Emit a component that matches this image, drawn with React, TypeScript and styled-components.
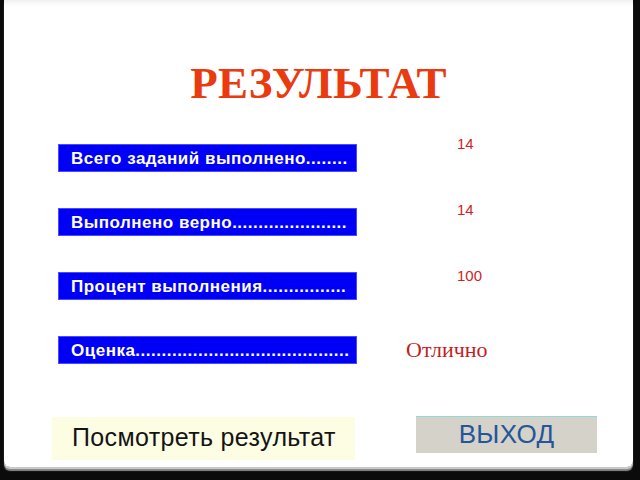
import React from "react";
import styled, { createGlobalStyle } from "styled-components";

const Global = createGlobalStyle`
  html, body {
    margin: 0;
    padding: 0;
    background: #0b0b0b;
    width: 640px;
    height: 480px;
    overflow: hidden;
  }
`;

const Screen = styled.div`
  width: 640px;
  height: 480px;
  background: #0b0b0b;
  display: flex;
  align-items: flex-start;
`;

const Slide = styled.div`
  margin-left: 4px;
  width: 629px;
  height: 467px;
  background: linear-gradient(#efefef 0px, #fbfbfb 4px, #ffffff 8px);
  border-radius: 0 0 6px 6px;
  box-shadow: 0 2px 0 #c9c9c9, 0 4px 1px #8a8a8a;
  display: flex;
  flex-direction: column;
  align-items: stretch;
  box-sizing: border-box;
  padding-top: 57px;
`;

const Title = styled.h1`
  margin: 0;
  text-align: center;
  font-family: "Liberation Serif", "Times New Roman", serif;
  font-weight: bold;
  font-size: 45px;
  line-height: 52px;
  color: #ea3a10;
  letter-spacing: 0.3px;
`;

const Rows = styled.div`
  margin-top: 35px;
  padding-left: 54px;
  display: flex;
  flex-direction: column;
  gap: 36px;
`;

const Row = styled.div`
  display: flex;
  align-items: flex-start;
  height: 28px;
`;

const Bar = styled.div`
  width: 299px;
  height: 28px;
  box-sizing: border-box;
  background: #0000f6;
  border: 1px solid #4a4aff;
  padding: 1px 0 0 12px;
  font-family: "Liberation Sans", Arial, sans-serif;
  font-weight: bold;
  font-size: 17px;
  letter-spacing: 0.5px;
  line-height: 26px;
  color: #ffffff;
  white-space: nowrap;
  overflow: hidden;
`;

const Count = styled.div<{ $lift: number }>`
  margin-left: 100px;
  margin-top: ${(p) => -p.$lift}px;
  font-family: "Liberation Sans", Arial, sans-serif;
  font-size: 15px;
  line-height: 17px;
  color: #d02424;
`;

const Grade = styled.div`
  margin-left: 49px;
  font-family: "Liberation Serif", "Times New Roman", serif;
  font-size: 22px;
  line-height: 28px;
  color: #c41e24;
`;

const Footer = styled.div`
  margin-top: 52px;
  display: flex;
  align-items: flex-start;
`;

const ResultBox = styled.div`
  margin-left: 48px;
  margin-top: 1px;
  width: 303px;
  height: 43px;
  box-sizing: border-box;
  background: #fdfde4;
  padding: 0 0 0 20px;
  font-family: "Liberation Sans", Arial, sans-serif;
  font-size: 25px;
  letter-spacing: 0.35px;
  line-height: 41px;
  color: #141414;
  white-space: nowrap;
`;

const ExitButton = styled.div`
  margin-left: 61px;
  width: 181px;
  height: 37px;
  box-sizing: border-box;
  background: #d5d2ca;
  border-top: 1px solid #8fdad8;
  text-align: center;
  font-family: "Liberation Sans", Arial, sans-serif;
  font-size: 26px;
  line-height: 35px;
  color: #24569a;
  letter-spacing: 0.3px;
`;

const dots = (n: number) => ".".repeat(n);

const rows = [
  { label: "Всего заданий выполнено" + dots(8), value: "14", lift: 9 },
  { label: "Выполнено верно" + dots(22), value: "14", lift: 7 },
  { label: "Процент выполнения" + dots(16), value: "100", lift: 5 },
];

export default function App() {
  return (
    <>
      <Global />
      <Screen>
        <Slide>
          <Title>РЕЗУЛЬТАТ</Title>
          <Rows>
            {rows.map((r) => (
              <Row key={r.label}>
                <Bar>{r.label}</Bar>
                <Count $lift={r.lift}>{r.value}</Count>
              </Row>
            ))}
            <Row>
              <Bar>{"Оценка" + dots(41)}</Bar>
              <Grade>Отлично</Grade>
            </Row>
          </Rows>
          <Footer>
            <ResultBox>Посмотреть результат</ResultBox>
            <ExitButton>ВЫХОД</ExitButton>
          </Footer>
        </Slide>
      </Screen>
    </>
  );
}
